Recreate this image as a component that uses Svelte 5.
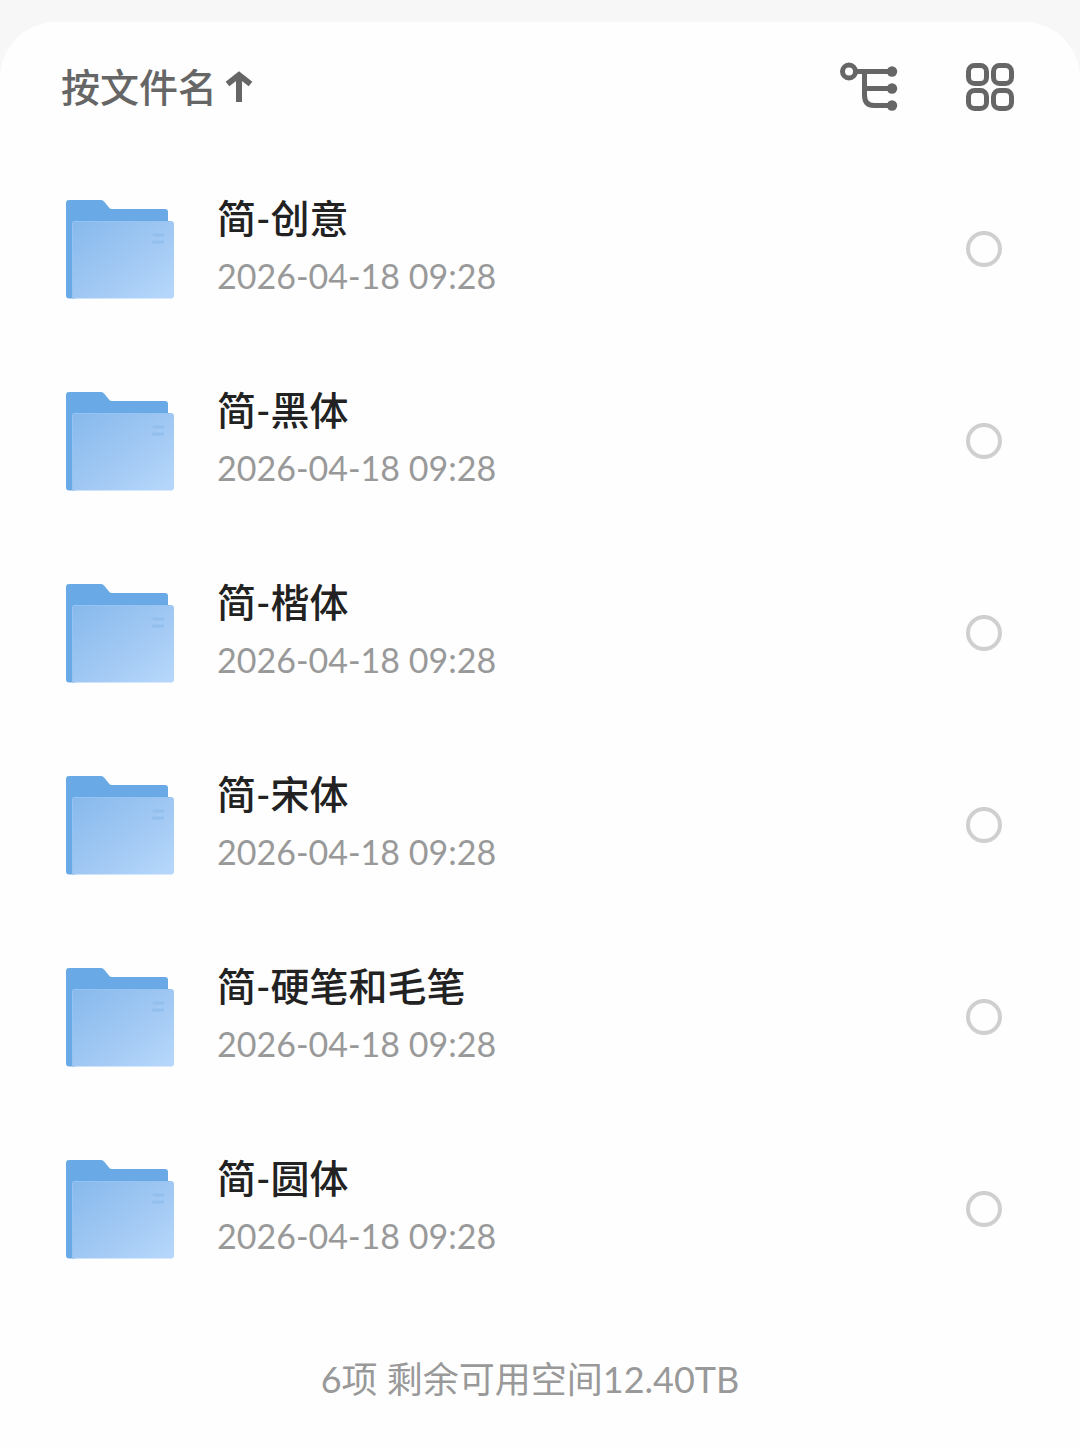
<script lang="ts">
  interface Folder {
    name: string;
    modified: string;
    selected: boolean;
  }

  let folders: Folder[] = $state(
    ["简-创意", "简-黑体", "简-楷体", "简-宋体", "简-硬笔和毛笔", "简-圆体"].map((name) => ({
      name,
      modified: "2026-04-18 09:28",
      selected: false,
    }))
  );
  let ascending = $state(true);

  const freeSpace = "12.40TB";

  function toggleSort() {
    ascending = !ascending;
    folders.reverse();
  }
</script>

<main class="sheet">
  <header class="toolbar">
    <button class="sort" onclick={toggleSort}>
      <span>按文件名</span>
      <svg class="arrow" class:down={!ascending} viewBox="0 0 28 32" aria-hidden="true">
        <path d="M14 31V4M2.500 13L14 4L25.500 13" />
      </svg>
    </button>
    <div class="views">
      <button class="view" aria-label="树形视图">
        <svg width="60" height="50" viewBox="0 0 60 50" aria-hidden="true">
          <g class="line">
            <circle cx="9" cy="9.500" r="6.500" />
            <path d="M16 9.500H52M24.500 9.500V33Q24.500 43.500 34 43.500H52M24.500 26.500H52" />
          </g>
          <circle cx="52" cy="9.500" r="5.200" />
          <circle cx="52" cy="26.500" r="5.200" />
          <circle cx="52" cy="43.500" r="5.200" />
        </svg>
      </button>
      <button class="view" aria-label="网格视图">
        <svg width="50" height="50" viewBox="0 0 50 50" aria-hidden="true">
          <g class="box">
            <rect x="3.500" y="3.500" width="18" height="18" rx="6" />
            <rect x="28.500" y="3.500" width="18" height="18" rx="6" />
            <rect x="3.500" y="28.500" width="18" height="18" rx="6" />
            <rect x="28.500" y="28.500" width="18" height="18" rx="6" />
          </g>
        </svg>
      </button>
    </div>
  </header>

  <ul class="list">
    {#each folders as folder (folder.name)}
      <li>
        <label class="row">
          <svg class="folder" viewBox="0 0 110 100" aria-hidden="true">
            <defs>
              <linearGradient id="front" x1="0" y1="0" x2="1" y2="1">
                <stop offset="0" stop-color="#86b9ec" />
                <stop offset="0.500" stop-color="#9fc7f3" />
                <stop offset="1" stop-color="#b7d8fb" />
              </linearGradient>
            </defs>
            <path
              fill="#69a9e5"
              d="M1 4Q1 1 4 1H36Q38 1 39.500 3L44 8.500Q45 10 47 10H100Q103 10 103 13V40L10 99.500H4Q1 99.500 1 96.500Z"
            />
            <path fill="url(#front)" d="M7 25Q7 22 10 22H106Q109 22 109 25V96.500Q109 99.500 106 99.500H7Z" />
            <path fill="none" stroke="#98c3f1" d="M7.500 99V25Q7.500 22.500 10 22.500H106" />
            <path fill="none" stroke="#93bfee" stroke-width="3" d="M88 36H99M87 43H99" />
          </svg>
          <span class="text">
            <span class="name">{folder.name}</span>
            <time class="date">{folder.modified}</time>
          </span>
          <input type="checkbox" bind:checked={folder.selected} />
        </label>
      </li>
    {/each}
  </ul>

  <footer>{folders.length}项 剩余可用空间{freeSpace}</footer>
</main>

<style>
  :global(body) {
    margin: 0;
    background: #f7f7f8;
    font-family: Lato, "Noto Sans CJK SC", sans-serif;
  }
  .sheet {
    min-height: calc(100vh - 22px);
    margin-top: 22px;
    box-sizing: border-box;
    padding: 33px 60px 36px;
    border-radius: 56px 56px 0 0;
    background: #fefefe;
  }
  .toolbar {
    display: flex;
    align-items: center;
    justify-content: space-between;
    height: 64px;
    padding: 0 5px 0 1px;
    margin-bottom: 34px;
  }
  button {
    padding: 0;
    border: none;
    background: none;
    color: #666;
    font-family: inherit;
    cursor: pointer;
  }
  .sort {
    display: flex;
    align-items: center;
    gap: 8px;
    font-size: 39px;
    font-weight: 500;
    line-height: 56px;
  }
  .arrow {
    width: 28px;
    height: 32px;
    fill: none;
    stroke: #666;
    stroke-width: 6;
  }
  .arrow.down {
    transform: rotate(180deg);
  }
  .views {
    display: flex;
    gap: 65px;
  }
  .view svg {
    display: block;
    fill: #666;
  }
  .line,
  .box {
    fill: none;
    stroke: #666;
    stroke-width: 5;
  }
  .list {
    margin: 0;
    padding: 0;
    list-style: none;
  }
  .row {
    display: flex;
    align-items: center;
    height: 192px;
    padding: 0 18px 0 5px;
    cursor: pointer;
  }
  .folder {
    width: 110px;
    height: 100px;
    margin-right: 42px;
  }
  .text {
    display: flex;
    flex: 1;
    flex-direction: column;
    gap: 2px;
    padding-bottom: 8px;
  }
  .name {
    color: #222;
    font-size: 39px;
    font-weight: 500;
    line-height: 60px;
  }
  .date {
    color: #999;
    font-size: 34px;
    line-height: 52px;
  }
  input {
    appearance: none;
    width: 36px;
    height: 36px;
    margin: 0;
    border: 4px solid #cfcfcf;
    border-radius: 50%;
    cursor: pointer;
  }
  input:checked {
    border-color: #69a9e5;
    background: #69a9e5;
  }
  footer {
    padding: 46px 20px 0 0;
    color: #999;
    font-size: 36px;
    line-height: 56px;
    text-align: center;
  }
</style>
